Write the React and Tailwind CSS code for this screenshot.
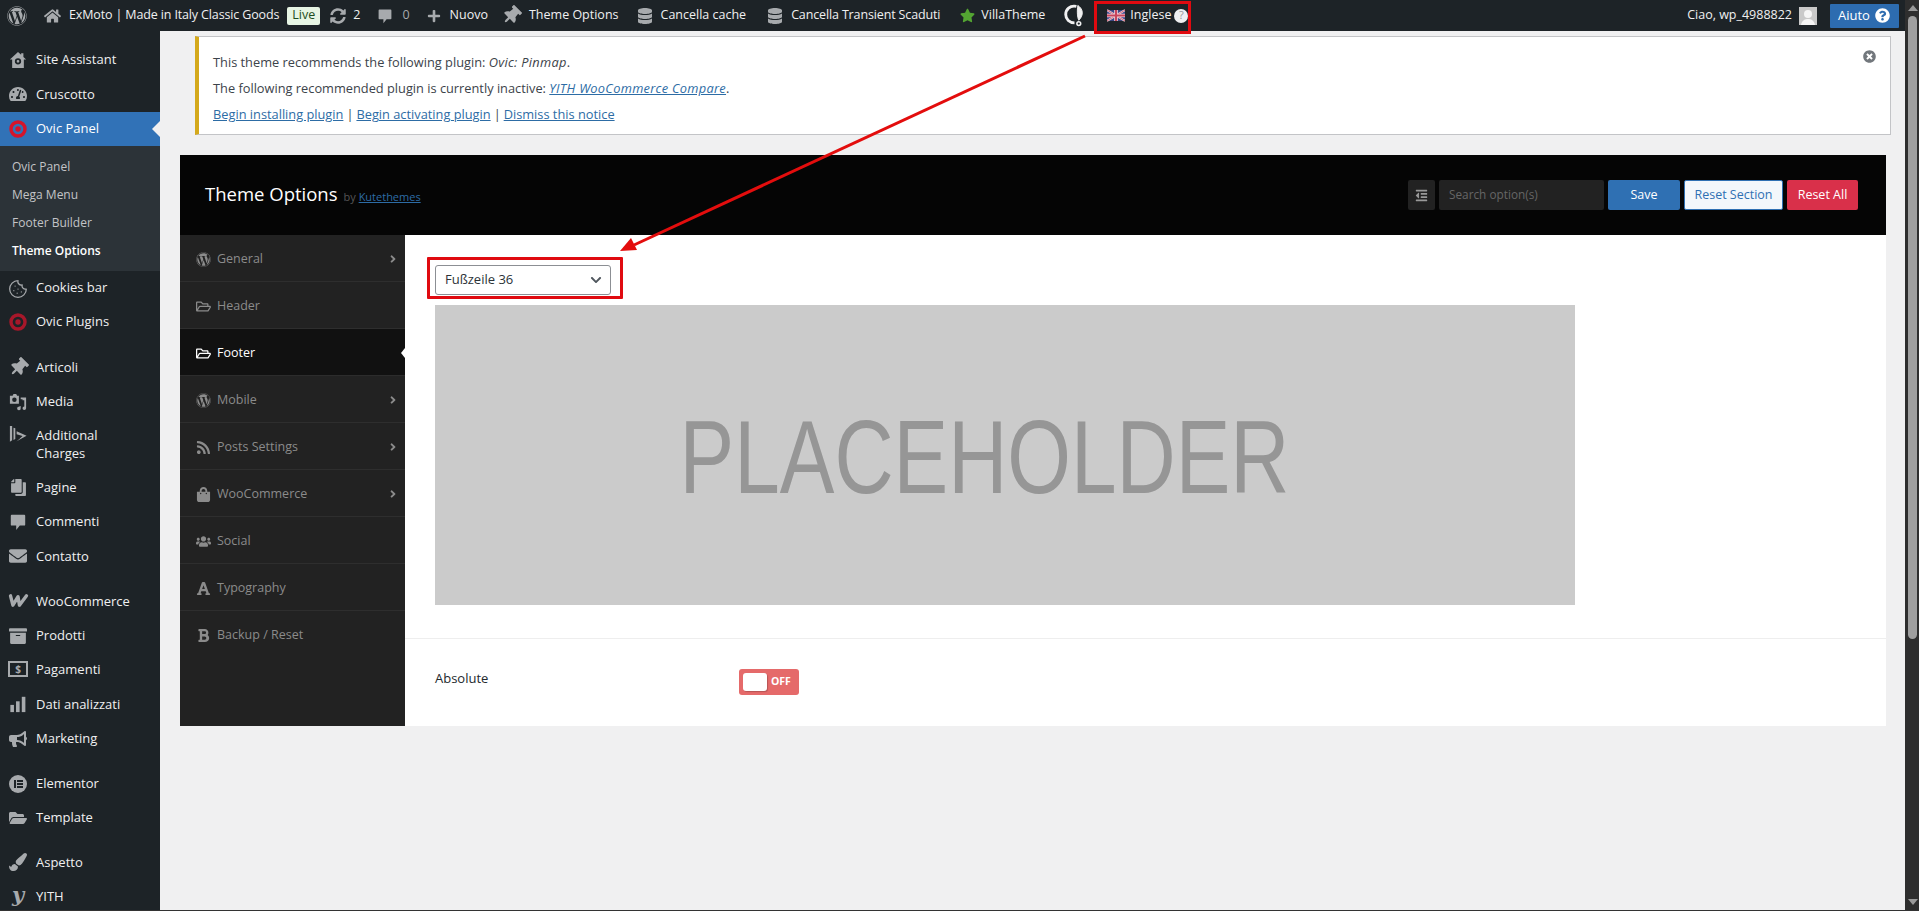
import React from "react";
import {
  FaWordpress, FaHome, FaSyncAlt, FaPlus, FaThumbtack, FaDatabase, FaStar, FaQuestionCircle,
  FaTachometerAlt, FaRegFolderOpen, FaRss, FaShoppingBag, FaUsers, FaFont, FaBold,
  FaAngleRight, FaOutdent, FaTimesCircle, FaEnvelope, FaArchive, FaBullhorn, FaFolderOpen, FaPaintBrush, FaCopy,
  FaChevronDown,
} from "react-icons/fa";
import { Cookie } from "lucide-react";

const Comment = ({ className }) => (
  <svg viewBox="0 0 20 20" className={className} fill="currentColor">
    <path d="M3 2h14a1 1 0 0 1 1 1v10a1 1 0 0 1-1 1h-5l-4 5v-5H3a1 1 0 0 1-1-1V3a1 1 0 0 1 1-1z" />
  </svg>
);
const Target = ({ className }) => (
  <svg viewBox="0 0 20 20" className={className} fill="none">
    <circle cx="10" cy="10" r="7.800" stroke="#d5142b" strokeWidth="3.800" />
    <circle cx="10" cy="10" r="3" fill="#d5142b" />
  </svg>
);
const HomeGear = ({ className }) => (
  <svg viewBox="0 0 20 20" className={className} fill="currentColor">
    <path fillRule="evenodd" d="M10 1 1 9.500h2.500V19h13V9.500H19L16 6.600V2.500h-2.500v1.700L10 1zM10 8a3.500 3.500 0 1 1 0 7 3.500 3.500 0 0 1 0-7zm0 2a1.500 1.500 0 1 0 0 3 1.500 1.500 0 0 0 0-3z" />
  </svg>
);
const Media = ({ className }) => (
  <svg viewBox="0 0 20 20" className={className} fill="currentColor">
    <path fillRule="evenodd" d="M1 3h3l1-2h3l1 2h2v9H1V3zm5 2a2.500 2.500 0 1 0 0 5 2.500 2.500 0 0 0 0-5z" />
    <path d="M13 5h6v12a2 2 0 1 1-2-2V8h-2V7h-2V5zM8 16l5-1.500V17a2 2 0 1 1-2-1.800z" />
  </svg>
);
const Charges = ({ className }) => (
  <svg viewBox="0 0 20 20" className={className} fill="currentColor">
    <path d="M1 1h2.500v16L1 18.500V1zM5 3l2 .6v12L5 16.600V3zM8.500 7 19.500 12 8.500 18l3-2.500 3.500-3.300-6.500-2V7z" />
  </svg>
);
const Bars = ({ className }) => (
  <svg viewBox="0 0 20 20" className={className} fill="currentColor">
    <rect x="1.500" y="11" width="4" height="8" />
    <rect x="7.800" y="7" width="4" height="12" />
    <rect x="14.200" y="2" width="4" height="17" />
  </svg>
);
const WooW = () => (
  <svg viewBox="0 0 22 16" className="w-[21px] h-[15px]" fill="none" stroke="#a7aaad" strokeWidth="3.600" strokeLinejoin="round" strokeLinecap="round">
    <path d="M2.500 3 5 13 10.500 4 12 13 19.500 3" />
  </svg>
);
const Dollar = () => (
  <span className="w-[20px] h-[16px] border-2 border-[#a7aaad] flex items-center justify-center text-[10px] font-bold text-[#a7aaad] leading-none">$</span>
);
const Elementor = () => (
  <span className="w-[18px] h-[18px] rounded-full bg-[#a7aaad] flex flex-col items-end justify-center gap-[1px] pr-[4px] relative">
    <span className="absolute left-[5px] top-[5px] w-[2px] h-[8px] bg-[#1d2327]" />
    <span className="w-[6px] h-[2px] bg-[#1d2327]" />
    <span className="w-[6px] h-[2px] bg-[#1d2327]" />
    <span className="w-[6px] h-[2px] bg-[#1d2327]" />
  </span>
);

const i18 = "w-[18px] h-[18px]";
const menu = [
  { t: "Site Assistant", i: <HomeGear className={i18} /> },
  { t: "Cruscotto", i: <FaTachometerAlt className={i18} /> },
  { t: "Ovic Panel", i: <Target className="w-[18px] h-[18px]" />, active: true },
  { sub: ["Ovic Panel", "Mega Menu", "Footer Builder", "Theme Options"] },
  { t: "Cookies bar", i: <Cookie className="w-[20px] h-[20px]" strokeWidth={1.500} /> },
  { t: "Ovic Plugins", i: <Target className="w-[18px] h-[18px] opacity-75" /> },
  { sep: true },
  { t: "Articoli", i: <FaThumbtack className="w-[19px] h-[19px] rotate-45" /> },
  { t: "Media", i: <Media className={i18} /> },
  { t: "Additional Charges", i: <Charges className={i18} />, two: true },
  { t: "Pagine", i: <FaCopy className="w-[17px] h-[17px] -scale-x-100" /> },
  { t: "Commenti", i: <Comment className={i18} /> },
  { t: "Contatto", i: <FaEnvelope className={i18} /> },
  { sep: true },
  { t: "WooCommerce", i: <WooW /> },
  { t: "Prodotti", i: <FaArchive className={i18} /> },
  { t: "Pagamenti", i: <Dollar /> },
  { t: "Dati analizzati", i: <Bars className={i18} /> },
  { t: "Marketing", i: <FaBullhorn className={i18} /> },
  { sep: true },
  { t: "Elementor", i: <Elementor /> },
  { t: "Template", i: <FaFolderOpen className={i18} /> },
  { sep: true, short: true },
  { t: "Aspetto", i: <FaPaintBrush className={i18} /> },
  { t: "YITH", i: <span className="font-['DejaVu_Serif'] italic font-bold text-[21px] leading-[14px]">y</span> },
];

const panelMenu = [
  { t: "General", i: <FaWordpress />, c: true },
  { t: "Header", i: <FaRegFolderOpen /> },
  { t: "Footer", i: <FaRegFolderOpen />, on: true },
  { t: "Mobile", i: <FaWordpress />, c: true },
  { t: "Posts Settings", i: <FaRss />, c: true },
  { t: "WooCommerce", i: <FaShoppingBag />, c: true },
  { t: "Social", i: <FaUsers /> },
  { t: "Typography", i: <FaFont /> },
  { t: "Backup / Reset", i: <FaBold />, last: true },
];

const Sidebar = () => (
  <nav className="w-[160px] shrink-0 bg-[#1d2327] pt-[12px] text-[13px] text-[#f0f0f1] overflow-hidden">
    {menu.map((m, k) => {
      if (m.sep) return <div key={k} className={m.short ? "h-[10px]" : "h-[11px]"} />;
      if (m.sub)
        return (
          <div key={k} className="bg-[#2c3338] h-[125px] pt-[7px] flex flex-col">
            {m.sub.map((s, j) => (
              <div key={j} className={"h-[28px] pl-[12px] flex items-center text-[12px] " + (j === 3 ? "font-semibold text-white" : "text-[#c3c4c7]")}>
                {s}
              </div>
            ))}
          </div>
        );
      return (
        <div
          key={k}
          className={
            "relative flex pl-[36px] " +
            (m.two ? "h-[52px] pt-[7px] leading-[18px]" : "h-[34.250px] items-center") +
            (m.active ? " bg-[#3172b7] text-white" : "")
          }
        >
          <span className={"absolute left-0 w-[36px] flex justify-center text-[#a7aaad] " + (m.two ? "top-[6px]" : "top-[8px]")}>{m.i}</span>
          <span className={m.two ? "w-[100px]" : ""}>{m.t}</span>
          {m.active && (
            <span className="absolute right-0 top-[9px] border-y-[8px] border-r-[8px] border-y-transparent border-r-[#f0f0f1]" />
          )}
        </div>
      );
    })}
  </nav>
);

const BarItem = ({ icon, children, className = "" }) => (
  <div className={"flex items-center whitespace-nowrap " + className}>
    {icon}
    {children}
  </div>
);

const AdminBar = () => (
  <header className="h-[31px] shrink-0 bg-[#1d2327] flex items-center text-[12.500px] text-[#f0f0f1] pl-[7px] pr-[6px]">
    <FaWordpress className="w-[20px] h-[20px] text-[#a7aaad]" />
    <BarItem className="ml-[17px]" icon={<FaHome className="w-[17px] h-[16px] text-[#a7aaad] mr-[8px]" />}><span className="tracking-[-0.14px]">ExMoto | Made in Italy Classic Goods</span></BarItem>
    <span className="ml-[8px] h-[18px] w-[33px] rounded-[2px] bg-[#e7f5e4] text-[#1d4d20] flex items-center justify-center">Live</span>
    <BarItem className="ml-[10px]" icon={<FaSyncAlt className="w-[16px] h-[16px] text-[#a7aaad] mr-[7px]" />}>2</BarItem>
    <BarItem className="ml-[17px] text-[#a7aaad]" icon={<Comment className="w-[16px] h-[16px] mr-[9px]" />}>0</BarItem>
    <BarItem className="ml-[17px]" icon={<FaPlus className="w-[14px] h-[14px] text-[#a7aaad] mr-[9px]" />}>Nuovo</BarItem>
    <BarItem className="ml-[14px]" icon={<FaThumbtack className="w-[19px] h-[19px] text-[#a7aaad] rotate-45 mr-[8px]" />}>Theme Options</BarItem>
    <BarItem className="ml-[19px]" icon={<FaDatabase className="w-[14px] h-[16px] text-[#a7aaad] mr-[9px]" />}>Cancella cache</BarItem>
    <BarItem className="ml-[22px]" icon={<FaDatabase className="w-[14px] h-[16px] text-[#a7aaad] mr-[9px]" />}><span className="tracking-[-0.14px]">Cancella Transient Scaduti</span></BarItem>
    <BarItem className="ml-[20px]" icon={<FaStar className="w-[15px] h-[15px] text-[#53a432] mr-[6px]" />}>VillaTheme</BarItem>
    <svg viewBox="0 0 22 24" className="ml-[19px] w-[21px] h-[23px]" fill="none" stroke="#f0f0f1">
      <path d="M13 2.500C6 1 1.800 6 1.800 11c0 5 4 8.700 9.200 8.700" strokeWidth="3" />
      <path d="M14.500 1.500c5.500 3.500 6.500 10 1 15.500-1.500-3-2-9-1-15.500z" fill="#f0f0f1" strokeWidth="1" />
      <circle cx="15.500" cy="20.500" r="2" strokeWidth="1.600" />
    </svg>
    <svg viewBox="0 0 60 36" className="ml-[22px] w-[18px] h-[13px]">
      <rect width="60" height="36" fill="#3f4a8c" />
      <path d="M0 0 60 36M60 0 0 36" stroke="#f0d8de" strokeWidth="7" />
      <path d="M0 0 60 36M60 0 0 36" stroke="#c8445c" strokeWidth="2.500" />
      <path d="M30 0v36M0 18h60" stroke="#f0d8de" strokeWidth="12" />
      <path d="M30 0v36M0 18h60" stroke="#c8445c" strokeWidth="7" />
    </svg>
    <span className="ml-[5px]">Inglese</span>
    <span className="ml-[3px] w-[14px] h-[14px] rounded-full bg-[#f0f0f1] text-[#999] text-[11px] flex items-center justify-center">?</span>
    <div className="ml-auto flex items-center">
      <span>Ciao, wp_4988822</span>
      <span className="ml-[7px] w-[18px] h-[18px] bg-[#c9c9c9] flex items-end justify-center overflow-hidden">
        <svg viewBox="0 0 18 18" className="w-[18px] h-[18px]" fill="#f5f5f5">
          <circle cx="9" cy="7" r="4" />
          <path d="M2 18c1-5 4-6 7-6s6 1 7 6z" />
        </svg>
      </span>
      <div className="ml-[13px] w-[69px] h-[24px] bg-[#2d6cb0] rounded-[1px] flex items-center pl-[8px] text-[13px] text-white">
        Aiuto
        <FaQuestionCircle className="ml-[5px] w-[15px] h-[15px]" />
      </div>
    </div>
  </header>
);

const Notice = () => (
  <div className="ml-[35px] mr-[14px] mt-[5px] h-[99px] bg-white border border-[#c3c4c7] border-l-4 border-l-[#d4a91c] pl-[14px] pt-[13px] text-[12.800px] text-[#3c434a] relative">
    <p className="h-[26px] flex items-center">
      This theme recommends the following plugin:&nbsp;<em className="tracking-[0.3px]">Ovic: Pinmap</em>.
    </p>
    <p className="h-[26px] flex items-center">
      The following recommended plugin is currently inactive:&nbsp;
      <em className="text-[#2d6ca5] underline tracking-[0.3px]">YITH WooCommerce Compare</em>.
    </p>
    <p className="h-[26px] flex items-center text-[#2d6ca5]">
      <span className="underline">Begin installing plugin</span>
      <span className="text-[#3c434a] mx-[3px]">|</span>
      <span className="underline">Begin activating plugin</span>
      <span className="text-[#3c434a] mx-[3px]">|</span>
      <span className="underline">Dismiss this notice</span>
    </p>
    <FaTimesCircle className="absolute right-[14px] top-[13px] w-[13px] h-[13px] text-[#72777c]" />
  </div>
);

const PanelHeader = () => (
  <div className="h-[80px] bg-[#050505] flex items-center pl-[25px] pr-[28px]">
    <span className="text-[18.500px] text-white leading-none -mt-[2px]">Theme Options</span>
    <span className="ml-[6px] mt-[4px] text-[11px] text-[#555]">by <span className="text-[#2d6ca5] underline">Kutethemes</span></span>
    <div className="ml-auto flex items-center h-[30px] text-[12.500px]">
      <span className="w-[27px] h-full bg-[#222] rounded-[2px] flex items-center justify-center text-[#999]"><FaOutdent className="w-[13px] h-[13px]" /></span>
      <span className="ml-[4px] w-[165px] h-full bg-[#222] rounded-[2px] flex items-center pl-[10px] text-[#666] text-[11.800px]">Search option(s)</span>
      <span className="ml-[4px] w-[72px] h-full bg-[#2f70b3] rounded-[2px] flex items-center justify-center text-white">Save</span>
      <span className="ml-[4px] w-[99px] h-full bg-[#f3f7fb] border border-[#2f70b3] rounded-[2px] flex items-center justify-center text-[#2f70b3]">Reset Section</span>
      <span className="ml-[4px] w-[71px] h-full bg-[#d9304a] rounded-[2px] flex items-center justify-center text-white">Reset All</span>
    </div>
  </div>
);

const PanelMenu = () => (
  <div className="w-[225px] shrink-0 bg-[#222222] text-[12.500px]">
    {panelMenu.map((m, k) => (
      <div
        key={k}
        className={
          "relative h-[47px] pl-[15px] pt-[2px] flex items-center border-b " +
          (m.on ? "bg-[#111] text-white border-[#2c2c2c]" : "text-[#8b8b8b] border-[#2e2e2e]") +
          (m.last ? " border-b-0" : "")
        }
      >
        <span className={"w-[16px] text-[15px] flex justify-center mr-[6px] " + (m.on ? "text-white" : "text-[#8b8b8b]")}>{m.i}</span>
        {m.t}
        {m.c && <FaAngleRight className="absolute right-[6px] w-[12px] h-[12px] text-[#8b8b8b]" />}
        {m.on && <span className="absolute right-0 border-y-[5px] border-r-[4px] border-y-transparent border-r-white" />}
      </div>
    ))}
  </div>
);

const PanelBody = () => (
  <div className="flex-1 bg-white flex flex-col">
    <div className="h-[404px] border-b border-[#eeeeee] pl-[30px] pt-[30px] flex flex-col">
      <div className="w-[176px] h-[30px] border border-[#8c8f94] rounded-[3px] flex items-center pl-[9px] pr-[8px] text-[13px] text-[#2c3338] shrink-0">
        Fußzeile 36
        <FaChevronDown className="ml-auto w-[12px] h-[12px] text-[#50575e]" />
      </div>
      <div className="mt-[10px] w-[1140px] h-[300px] bg-[#cbcbcb] flex items-center justify-center overflow-hidden shrink-0 pr-[40px] pt-[5px]">
        <span className="font-['Liberation_Sans'] text-[#969696] text-[103px] leading-none scale-x-[0.795] whitespace-nowrap">PLACEHOLDER</span>
      </div>
    </div>
    <div className="flex-1 pl-[30px] pt-[30px] flex">
      <span className="w-[304px] text-[13px] font-medium text-[#23282d] h-[18px] leading-[18px]">Absolute</span>
      <div className="w-[60px] h-[26px] bg-[#e56a6a] rounded-[3px] flex items-center pl-[4px] text-white text-[10.500px] font-bold">
        <span className="w-[24px] h-[18px] bg-white rounded-[3px] mr-[4px] shadow-[1px_1px_1px_rgba(0,0,0,0.2)]" />
        OFF
      </div>
    </div>
  </div>
);

const Arrow = () => (
  <svg className="absolute left-0 top-0 pointer-events-none" width="1919" height="911">
    <line x1="1085" y1="36" x2="634" y2="245" stroke="#e30d0d" strokeWidth="3" />
    <polygon points="620,251 631,238 637,250" fill="#e30d0d" />
  </svg>
);

export default function App() {
  return (
    <div className="relative w-[1919px] h-[911px] overflow-hidden flex flex-col font-['Open_Sans','Noto_Sans',sans-serif]">
      <div className="flex-1 min-h-0 flex">
        <div className="w-[1905px] flex flex-col">
          <AdminBar />
          <div className="flex-1 min-h-0 flex">
            <Sidebar />
            <main className="flex-1 bg-[#f0f0f1]">
              <Notice />
              <div className="ml-[20px] mr-[19px] mt-[20px]">
                <PanelHeader />
                <div className="flex h-[491px]">
                  <PanelMenu />
                  <PanelBody />
                </div>
              </div>
            </main>
          </div>
        </div>
        <div className="w-[14px] bg-[#2e2e2e] flex flex-col items-center pt-[5px] pb-[5px]">
          <span className="border-x-[5px] border-b-[6px] border-x-transparent border-b-[#9a9a9a] ml-[1px]" />
          <span className="w-[9px] h-[623px] mt-[5px] ml-[1px] bg-[#9f9f9f] rounded-full" />
          <span className="mt-auto border-x-[5px] border-t-[6px] border-x-transparent border-t-[#9a9a9a] ml-[1px]" />
        </div>
      </div>
      <div className="h-[1px] bg-[#333] shrink-0" />
      <div className="absolute left-[1094px] top-[1px] w-[97px] h-[33px] border-[3px] border-[#e00a10]" />
      <div className="absolute left-[427px] top-[257px] w-[196px] h-[42px] border-[3px] border-[#e00a10] rounded-[1px]" />
      <Arrow />
    </div>
  );
}
